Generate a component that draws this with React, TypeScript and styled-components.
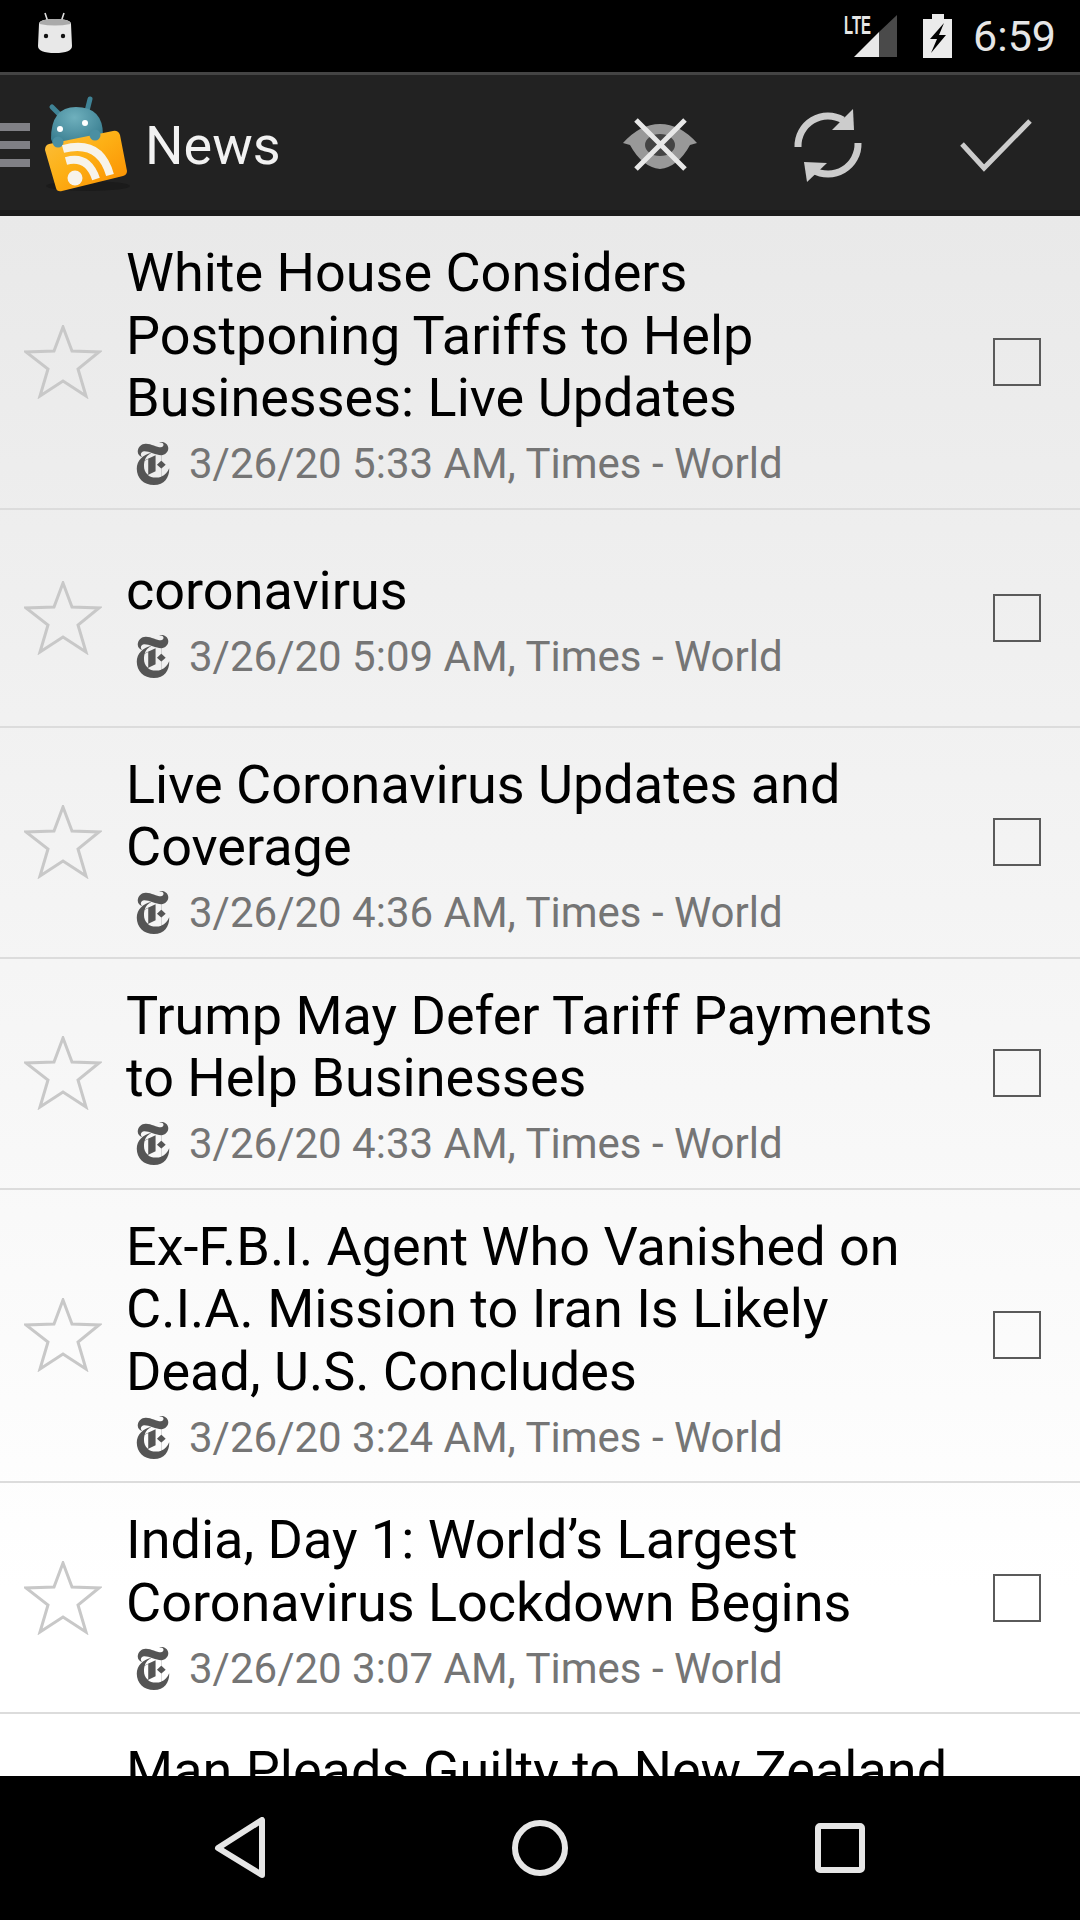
import React from 'react';
import styled, { createGlobalStyle } from 'styled-components';
import { SiNewyorktimes } from 'react-icons/si';

const GlobalStyle = createGlobalStyle`
  html, body {
    margin: 0;
    padding: 0;
    background: #000;
  }
  * {
    box-sizing: border-box;
  }
`;

const Screen = styled.div`
  width: 1080px;
  height: 1920px;
  display: flex;
  flex-direction: column;
  overflow: hidden;
  font-family: Roboto, "Liberation Sans", sans-serif;
`;

const StatusBar = styled.div`
  height: 72px;
  flex: none;
  background: #000;
  display: flex;
  align-items: flex-start;
  padding: 12px 24px 0 37px;
`;

const StatusRight = styled.div`
  margin-left: auto;
  margin-top: 2px;
  display: flex;
  align-items: center;
`;

const Clock = styled.span`
  color: #e6e6e6;
  font-size: 43px;
  margin-left: 20px;
  line-height: 44px;
`;

const ActionBar = styled.div`
  height: 144px;
  flex: none;
  background: #222;
  border-top: 3px solid #444;
  border-bottom: 6px solid #1a1a1a;
  padding-top: 4px;
  display: flex;
  align-items: center;
`;

const Title = styled.h1`
  margin: 2px 0 0 13px;
  font-size: 54px;
  font-weight: 400;
  color: #f2f2f2;
  flex: 1;
`;

const ActionItem = styled.div`
  width: 168px;
  display: flex;
  justify-content: center;
  align-items: center;
`;

const List = styled.div`
  flex: 1;
  min-height: 0;
  overflow: hidden;
  background: linear-gradient(#e9e9e9, #ffffff 88%);
`;

const Row = styled.div`
  min-height: 218px;
  display: flex;
  align-items: center;
  border-bottom: 2px solid #dcdcdc;
`;

const PartialRow = styled.div`
  padding: 26px 0 0 126px;
`;

const StarCell = styled.div`
  width: 126px;
  flex: none;
  padding-left: 24px;
  display: flex;
`;

const Body = styled.div`
  flex: 1;
  min-width: 0;
  padding: 26px 0 12px;
`;

const Headline = styled.div`
  font-size: 54px;
  line-height: 62.5px;
  color: #000;
`;

const Meta = styled.div`
  display: flex;
  align-items: center;
  height: 66px;
  padding: 2px 0 0 6px;
  color: #757575;
  font-size: 42px;
  white-space: nowrap;
`;

const TimesMark = styled(SiNewyorktimes)`
  width: 42px;
  height: 43px;
  color: #555;
  margin-right: 15px;
  flex: none;
`;

const CheckCell = styled.div`
  width: 126px;
  flex: none;
  padding-left: 39px;
`;

const CheckBox = styled.div`
  width: 48px;
  height: 48px;
  border: 2px solid #5a5a5a;
`;

const NavBar = styled.div`
  height: 144px;
  flex: none;
  background: #000;
  padding: 0 90px;
  display: grid;
  grid-template-columns: repeat(3, 300px);
  align-items: center;
  justify-items: center;
`;

const AndroidHead = () => (
  <svg width="36" height="42" viewBox="36 12 36 42">
    <path d="M44 13 L47 22 M63 13 L60 22" stroke="#ddd" strokeWidth="1.6" />
    <path d="M38 24 Q38 19 54 19 Q70 19 70 24 L71 46 Q71 53 54 53 Q37 53 37 46 Z" fill="#e8e8e8" />
    <path d="M38.5 24 Q38.5 19 54 19 Q69.5 19 69.5 24 Q54 27 38.5 24 Z" fill="#aaa" />
    <circle cx="45" cy="36" r="2.2" fill="#111" />
    <circle cx="62" cy="36" r="2.2" fill="#111" />
  </svg>
);

const SignalIcon = () => (
  <svg width="54" height="52" viewBox="845 6 54 52" style={{ marginTop: -8 }}>
    <text x="845" y="34" fontFamily="'Liberation Sans', Roboto, sans-serif" fontSize="26" fontWeight="700" fill="#e6e6e6" textLength="27" lengthAdjust="spacingAndGlyphs">LTE</text>
    <polygon points="855,57 880,32 880,57" fill="#e8e8e8" />
    <polygon points="880,32 898,15 898,57 880,57" fill="#4a4a4a" />
  </svg>
);

const BatteryIcon = () => (
  <svg width="30" height="44" viewBox="923 14 30 44" style={{ marginLeft: 25 }}>
    <path d="M923 19 H932 V14 H944 V19 H952 V58 H923 Z" fill="#ebebeb" />
    <polygon points="944,23 930,39 937,39 931,53 946,35 939,35" fill="#000" />
  </svg>
);

const Hamburger = () => (
  <svg width="30" height="44" viewBox="0 124 30 44" style={{ flex: 'none' }}>
    <rect x="0" y="124" width="30" height="8" fill="#808085" />
    <rect x="0" y="142" width="30" height="8" fill="#808085" />
    <rect x="0" y="160" width="30" height="8" fill="#808085" />
  </svg>
);

const AppLogo = () => (
  <svg width="92" height="102" viewBox="40 93 92 102" style={{ marginLeft: 10, flex: 'none' }}>
    <defs>
      <radialGradient id="head" cx="45%" cy="25%" r="80%">
        <stop offset="0%" stopColor="#6fb0bd" />
        <stop offset="100%" stopColor="#2f7488" />
      </radialGradient>
      <linearGradient id="card" x1="0" y1="0" x2="1" y2="1">
        <stop offset="0%" stopColor="#fbc040" />
        <stop offset="45%" stopColor="#fdb015" />
        <stop offset="100%" stopColor="#fb8c00" />
      </linearGradient>
    </defs>
    <ellipse cx="88" cy="185" rx="42" ry="5" fill="#1b1b1b" />
    <path d="M52 106 L60 114 M90 98 L87 110" stroke="#3f8396" strokeWidth="5" strokeLinecap="round" />
    <path d="M51 138 Q51 106 76 106 Q103 106 103 134 L103 142 L55 148 Z" fill="url(#head)" />
    <circle cx="60" cy="128" r="3" fill="#fff" />
    <circle cx="85" cy="122" r="3" fill="#fff" />
    <path d="M49 143 L113 130 Q118 129 120 134 L127 170 Q127 174 123 175 L62 190 Q57 191 56 187 L45 149 Q45 144 49 143 Z" fill="url(#card)" />
    <circle cx="58" cy="141" r="5.5" fill="#4a8fa2" />
    <circle cx="95" cy="134" r="5.5" fill="#4a8fa2" />
    <circle cx="75" cy="177" r="7.5" fill="#f7f3ea" />
    <path d="M66 160 Q88 154 96 178" fill="none" stroke="#f7f3ea" strokeWidth="8" />
    <path d="M63 148 Q100 138 110 174" fill="none" stroke="#f7f3ea" strokeWidth="8" />
  </svg>
);

const HideReadIcon = () => (
  <svg width="76" height="56" viewBox="622 116 76 56">
    <path d="M623 142 Q640 123 660 123 Q680 123 697 142 L690 144 Q678 166 660 168 Q642 166 630 144 Z" fill="#999" />
    <ellipse cx="660" cy="144" rx="15" ry="11" fill="#444" />
    <path d="M636 119 L685 168 M685 119 L636 168" stroke="#e8e8e8" strokeWidth="5" />
  </svg>
);

const SyncIcon = () => (
  <svg width="70" height="76" viewBox="793 107 70 76">
    <path d="M798 147 A30 30 0 0 1 843 120" fill="none" stroke="#ccc" strokeWidth="7" />
    <polygon points="853,109 854,130 832,130" fill="#ccc" />
    <path d="M858 143 A30 30 0 0 1 813 170" fill="none" stroke="#ccc" strokeWidth="7" />
    <polygon points="804,162 807,182 827,163" fill="#ccc" />
  </svg>
);

const CheckIcon = () => (
  <svg width="76" height="60" viewBox="958 114 76 60">
    <path d="M962 143 L984 167 L1030 120" fill="none" stroke="#ccc" strokeWidth="5" />
  </svg>
);

const Star = () => (
  <svg width="78" height="74" viewBox="24 326 78 74">
    <polygon
      points="63,328 72,352 99,353 78,370 86,397 63,382 40,397 48,370 26,353 54,352"
      fill="none"
      stroke="#c8c8c8"
      strokeWidth="3"
    />
  </svg>
);

const BackIcon = () => (
  <svg width="52" height="62" viewBox="214 1817 52 62">
    <path d="M262 1820 V1875 L218 1848 Z" fill="none" stroke="#e6e6e6" strokeWidth="6" strokeLinejoin="round" />
  </svg>
);

const HomeIcon = () => (
  <svg width="60" height="60" viewBox="0 0 60 60">
    <circle cx="30" cy="30" r="25" fill="none" stroke="#e6e6e6" strokeWidth="6" />
  </svg>
);

const RecentsIcon = () => (
  <svg width="50" height="50" viewBox="0 0 50 50">
    <rect x="3" y="3" width="44" height="44" rx="2" fill="none" stroke="#e6e6e6" strokeWidth="6" />
  </svg>
);

interface Article {
  title: string[];
  time: string;
}

const articles: Article[] = [
  { title: ['White House Considers', 'Postponing Tariffs to Help', 'Businesses: Live Updates'], time: '3/26/20 5:33 AM' },
  { title: ['coronavirus'], time: '3/26/20 5:09 AM' },
  { title: ['Live Coronavirus Updates and', 'Coverage'], time: '3/26/20 4:36 AM' },
  { title: ['Trump May Defer Tariff Payments', 'to Help Businesses'], time: '3/26/20 4:33 AM' },
  { title: ['Ex-F.B.I. Agent Who Vanished on', 'C.I.A. Mission to Iran Is Likely', 'Dead, U.S. Concludes'], time: '3/26/20 3:24 AM' },
  { title: ['India, Day 1: World’s Largest', 'Coronavirus Lockdown Begins'], time: '3/26/20 3:07 AM' },
];

const App: React.FC = () => {
  return (
    <Screen>
      <GlobalStyle />
      <StatusBar>
        <AndroidHead />
        <StatusRight>
          <SignalIcon />
          <BatteryIcon />
          <Clock>6:59</Clock>
        </StatusRight>
      </StatusBar>
      <ActionBar>
        <Hamburger />
        <AppLogo />
        <Title>News</Title>
        <ActionItem><HideReadIcon /></ActionItem>
        <ActionItem><SyncIcon /></ActionItem>
        <ActionItem><CheckIcon /></ActionItem>
      </ActionBar>
      <List>
        {articles.map((a) => (
          <Row key={a.time}>
            <StarCell><Star /></StarCell>
            <Body>
              <Headline>
                {a.title.map((line) => (
                  <div key={line}>{line}</div>
                ))}
              </Headline>
              <Meta>
                <TimesMark preserveAspectRatio="none" />
                {a.time}, Times - World
              </Meta>
            </Body>
            <CheckCell><CheckBox /></CheckCell>
          </Row>
        ))}
        {/* only the top of this row shows above the nav bar */}
        <PartialRow>
          <Headline>Man Pleads Guilty to New Zealand</Headline>
        </PartialRow>
      </List>
      <NavBar>
        <BackIcon />
        <HomeIcon />
        <RecentsIcon />
      </NavBar>
    </Screen>
  );
};

export default App;
